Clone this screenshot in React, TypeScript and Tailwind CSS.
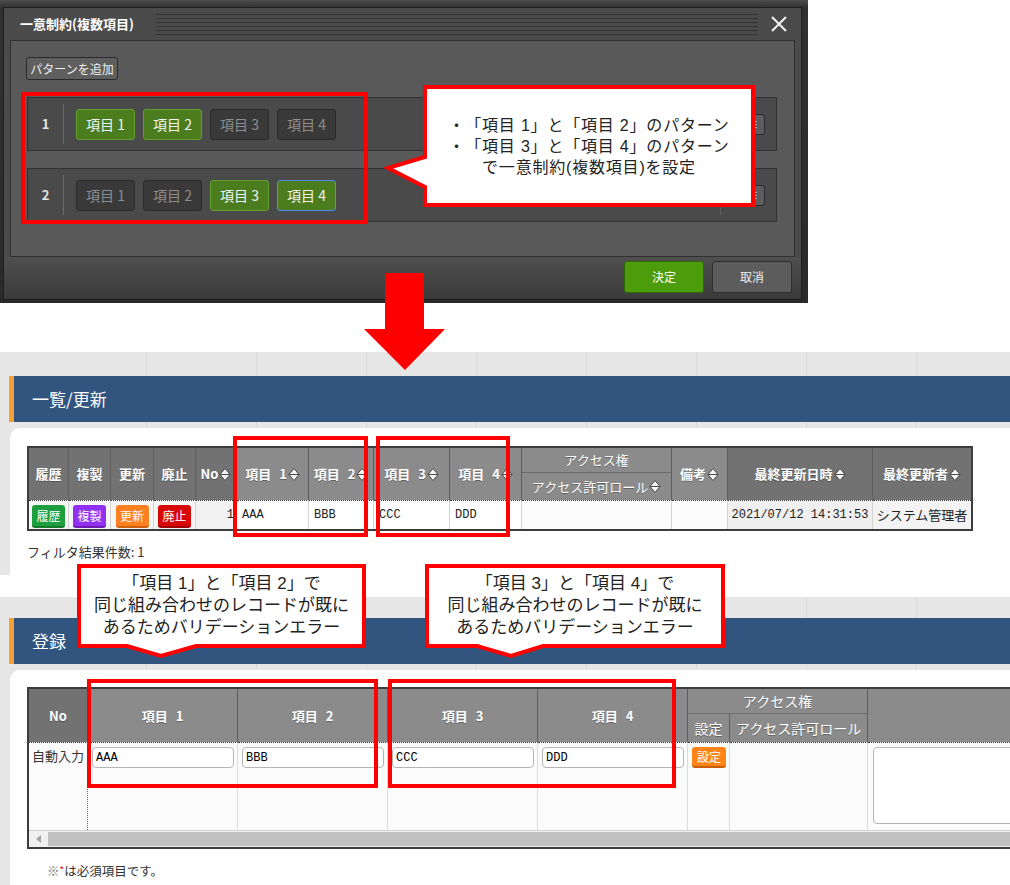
import React from "react";
import clsx from "clsx";

const dark = "bg-[#727272]";
const light = "bg-[#8b8b8b]";
const mono = "font-['Liberation_Mono',monospace]";
const note = "font-['Liberation_Sans','Noto_Sans_CJK_JP',sans-serif]";

const thBase =
  "border-r border-[#5e5e5e] p-0 text-center align-middle text-[13px] font-bold text-white [text-shadow:0_1px_0_rgba(0,0,0,0.3)]";

const td1 =
  "h-[29px] border-r border-[#d3d3d3] border-t border-t-[#333] [border-top-style:dotted] p-0 align-middle";

const td2 =
  "h-[88px] border-r border-[#dcdcdc] border-t border-t-[#333] [border-top-style:dotted] bg-[#fbfbfb] p-0 align-top";

function SortIcon() {
  return (
    <svg width="12" height="15" viewBox="0 0 12 15" className="ml-[1px] inline-block shrink-0">
      <path d="M1 7.5 L6 1.5 L11 7.5 Z" fill="#f4f4f4" stroke="#4a4a4a" strokeWidth="1" />
      <path d="M1 7.5 L6 13.5 L11 7.5 Z" fill="#f4f4f4" stroke="#4a4a4a" strokeWidth="1" />
    </svg>
  );
}

function Sortable({ children }: { children: React.ReactNode }) {
  return (
    <span className="inline-flex items-center justify-center">
      {children}
      <SortIcon />
    </span>
  );
}

function Chip({ n, on, focus }: { n: number; on: boolean; focus?: boolean }) {
  return (
    <div
      className={clsx(
        "flex h-[31px] w-[59px] items-center justify-center rounded-[3px] border text-[14px]",
        on ? "bg-[#4b7d1f] text-[#f2f2f2]" : "border-[#2b2b2b] bg-[#393939] text-[#8d8d8d]",
        on && !focus && "border-[#62a02d]",
        focus && "border-[#4d8fe6]"
      )}
    >
      項目 {n}
    </div>
  );
}

function PatternRow({ no, on, focus }: { no: number; on: number[]; focus?: number }) {
  return (
    <div className="flex h-[54px] w-[750px] items-stretch border border-[#323232] bg-[#4a4a4a]">
      <div className="flex w-[35px] items-center justify-center text-[13px] font-bold text-[#e2e2e2]">
        {no}
      </div>
      <div className="my-[6px] w-px bg-[#6a6a6a]" />
      <div className="flex items-center gap-[8px] pl-[12px]">
        {[1, 2, 3, 4].map((n) => (
          <Chip key={n} n={n} on={on.includes(n)} focus={focus === n} />
        ))}
      </div>
      <div className="flex-1" />
      <div className="my-[6px] w-px bg-[#606060]" />
      <div className="flex items-center pl-[20px] pr-[11px]">
        <div className="flex h-[21px] w-[24px] flex-col items-center justify-center gap-[2px] rounded-[3px] border border-[#2a2a2a] bg-[#5d5d5d]">
          <span className="h-px w-[8px] bg-[#aaa]" />
          <span className="h-px w-[8px] bg-[#aaa]" />
          <span className="h-px w-[8px] bg-[#aaa]" />
        </div>
      </div>
    </div>
  );
}

function DialogShot() {
  return (
    <div className="h-[303px] w-[808px] bg-[linear-gradient(180deg,#4d4d4d_0px,#303030_8px,#2a2a2a_100%)] pl-[3px] pt-[7px]">
      <div className="flex h-[293px] w-[799px] flex-col border border-[#1f1f1f] bg-[#4b4b4b]">
        <div className="flex h-[32px] items-center pl-[16px]">
          <span className="w-[116px] text-[13px] font-bold text-white">一意制約(複数項目)</span>
          <div className="ml-[20px] flex w-[602px] flex-col gap-[3px]">
            {[0, 1, 2, 3, 4, 5].map((i) => (
              <div key={i} className="h-px bg-[#333]" />
            ))}
          </div>
          <svg width="18" height="18" viewBox="0 0 18 18" className="ml-[12px]">
            <path d="M2 2 L16 16 M16 2 L2 16" stroke="#f2f2f2" strokeWidth="2" />
          </svg>
        </div>
        <div className="mx-[6px] h-[217px] border border-[#303030] bg-[#595959] pl-[15px] pt-[16px]">
          <button className="flex h-[23px] w-[92px] items-center justify-center rounded-[3px] border border-[#2a2a2a] bg-[#5f5f5f] text-[12px] text-[#eee]">
            パターンを追加
          </button>
          <div className="mt-[17px] flex flex-col gap-[17px] pl-[1px]">
            <PatternRow no={1} on={[1, 2]} />
            <PatternRow no={2} on={[3, 4]} focus={4} />
          </div>
        </div>
        <div className="flex flex-1 items-start justify-end gap-[8px] bg-gradient-to-b from-[#4f4f4f] to-[#3a3a3a] pr-[9px] pt-[4px]">
          <button className="flex h-[32px] w-[80px] items-center justify-center rounded-[3px] border border-[#2f6a05] bg-[#4c9c0c] text-[12px] text-white">
            決定
          </button>
          <button className="flex h-[32px] w-[80px] items-center justify-center rounded-[3px] border border-[#2e2e2e] bg-[#5c5c5c] text-[12px] text-[#eee]">
            取消
          </button>
        </div>
      </div>
    </div>
  );
}

function GridStrip({ className }: { className: string }) {
  return (
    <div className={clsx("flex", className)}>
      <div className="w-[147px] shrink-0 border-r border-[#d9d9d9]" />
      {[0, 1, 2, 3, 4, 5, 6, 7].map((i) => (
        <div key={i} className="w-[110px] shrink-0 border-r border-[#d9d9d9]" />
      ))}
    </div>
  );
}

function SectionHeader({ title }: { title: string }) {
  return (
    <div className="ml-[9px] flex h-[46px] items-center border-l-[5px] border-[#f6a032] bg-[#32557f] pl-[18px] text-[17px] text-white">
      {title}
    </div>
  );
}

function MiniBtn({ label, color }: { label: string; color: string }) {
  return (
    <span
      className={clsx(
        "inline-flex h-[23px] w-[33px] items-center justify-center rounded-[3px] border-b-2 text-[12px] text-white",
        color
      )}
    >
      {label}
    </span>
  );
}

function ListTable() {
  return (
    <table className="w-[946px] table-fixed border-separate border-spacing-0 border-2 border-[#3c3c3c]">
      <colgroup>
        <col className="w-[40px]" />
        <col className="w-[42px]" />
        <col className="w-[43px]" />
        <col className="w-[42px]" />
        <col className="w-[41px]" />
        <col className="w-[72px]" />
        <col className="w-[65px]" />
        <col className="w-[76px]" />
        <col className="w-[72px]" />
        <col className="w-[150px]" />
        <col className="w-[56px]" />
        <col className="w-[145px]" />
        <col className="w-[98px]" />
      </colgroup>
      <thead>
        <tr>
          <th rowSpan={2} className={clsx(thBase, dark)}>履歴</th>
          <th rowSpan={2} className={clsx(thBase, dark)}>複製</th>
          <th rowSpan={2} className={clsx(thBase, dark)}>更新</th>
          <th rowSpan={2} className={clsx(thBase, dark)}>廃止</th>
          <th rowSpan={2} className={clsx(thBase, dark, "text-[12px]")}>
            <Sortable>No</Sortable>
          </th>
          {[1, 2, 3, 4].map((n) => (
            <th key={n} rowSpan={2} className={clsx(thBase, light)}>
              <Sortable>
                項目<span className="ml-[8px]">{n}</span>
              </Sortable>
            </th>
          ))}
          <th className={clsx(thBase, light, "h-[25px] border-b border-b-[#6a6a6a] font-normal")}>
            アクセス権
          </th>
          <th rowSpan={2} className={clsx(thBase, light)}>
            <Sortable>備考</Sortable>
          </th>
          <th rowSpan={2} className={clsx(thBase, dark)}>
            <Sortable>最終更新日時</Sortable>
          </th>
          <th rowSpan={2} className={clsx(thBase, dark, "border-r-0")}>
            <Sortable>最終更新者</Sortable>
          </th>
        </tr>
        <tr>
          <th className={clsx(thBase, light, "h-[27px] font-normal")}>
            <Sortable>アクセス許可ロール</Sortable>
          </th>
        </tr>
      </thead>
      <tbody>
        <tr>
          <td className={clsx(td1, "bg-[#f6f6f6] text-center")}>
            <MiniBtn label="履歴" color="border-[#117a2b] bg-[#1e9f3f]" />
          </td>
          <td className={clsx(td1, "bg-[#f6f6f6] text-center")}>
            <MiniBtn label="複製" color="border-[#6a1cb3] bg-[#9130f0]" />
          </td>
          <td className={clsx(td1, "bg-[#f6f6f6] text-center")}>
            <MiniBtn label="更新" color="border-[#cf5f0a] bg-[#ff8020]" />
          </td>
          <td className={clsx(td1, "bg-[#f6f6f6] text-center")}>
            <MiniBtn label="廃止" color="border-[#a00000] bg-[#d90808]" />
          </td>
          <td className={clsx(td1, mono, "bg-[#f1f1f1] pr-[2px] text-right text-[12px] text-[#222]")}>1</td>
          <td className={clsx(td1, mono, "bg-white pl-[5px] text-[12px] text-[#222]")}>AAA</td>
          <td className={clsx(td1, mono, "bg-white pl-[5px] text-[12px] text-[#222]")}>BBB</td>
          <td className={clsx(td1, mono, "bg-white pl-[5px] text-[12px] text-[#222]")}>CCC</td>
          <td className={clsx(td1, mono, "bg-white pl-[5px] text-[12px] text-[#222]")}>DDD</td>
          <td className={clsx(td1, "bg-[#fbfbfb]")} />
          <td className={clsx(td1, "bg-[#fbfbfb]")} />
          <td className={clsx(td1, mono, "bg-[#efefef] text-center text-[12px] text-[#222]")}>
            2021/07/12 14:31:53
          </td>
          <td className={clsx(td1, "border-r-0 bg-[#f3f3f3] text-center text-[13px] text-[#222]")}>
            システム管理者
          </td>
        </tr>
      </tbody>
    </table>
  );
}

function Field({ v }: { v: string }) {
  return (
    <div
      className={clsx(
        "ml-[4px] mr-[3px] mt-[4px] flex h-[21px] items-center rounded-[4px] border border-[#b5b5b5] bg-white pl-[3px] text-[12px] text-black",
        mono
      )}
    >
      {v}
    </div>
  );
}

function RegisterTable() {
  return (
    <div className="w-[1061px] border-2 border-r-0 border-[#3c3c3c]">
      <table className="w-[1059px] table-fixed border-separate border-spacing-0">
        <colgroup>
          <col className="w-[59px]" />
          <col className="w-[150px]" />
          <col className="w-[150px]" />
          <col className="w-[150px]" />
          <col className="w-[150px]" />
          <col className="w-[42px]" />
          <col className="w-[138px]" />
          <col className="w-[220px]" />
        </colgroup>
        <thead>
          <tr>
            <th rowSpan={2} className={clsx(thBase, dark, "text-[12px]")}>No</th>
            {[1, 2, 3, 4].map((n) => (
              <th key={n} rowSpan={2} className={clsx(thBase, light)}>
                項目<span className="ml-[8px]">{n}</span>
              </th>
            ))}
            <th colSpan={2} className={clsx(thBase, light, "h-[25px] border-b border-b-[#6c6c6c] text-[14px] font-normal")}>
              アクセス権
            </th>
            <th rowSpan={2} className={clsx(thBase, light, "border-r-0")} />
          </tr>
          <tr>
            <th className={clsx(thBase, light, "h-[28px] text-[14px] font-normal")}>設定</th>
            <th className={clsx(thBase, light, "text-[14px] font-normal")}>アクセス許可ロール</th>
          </tr>
        </thead>
        <tbody>
          <tr>
            <td className={clsx(td2, "border-r-[#666] [border-right-style:dotted] pl-[3px] pt-[3px] text-[13px] text-[#333]")}>
              自動入力
            </td>
            <td className={td2}>
              <Field v="AAA" />
            </td>
            <td className={td2}>
              <Field v="BBB" />
            </td>
            <td className={td2}>
              <Field v="CCC" />
            </td>
            <td className={td2}>
              <Field v="DDD" />
            </td>
            <td className={td2}>
              <span className="ml-[4px] mt-[4px] flex h-[21px] w-[34px] items-center justify-center rounded-[3px] border-b-2 border-[#c95c05] bg-[#ff8418] text-[12px] text-white">
                設定
              </span>
            </td>
            <td className={td2} />
            <td className={clsx(td2, "border-r-0")}>
              <div className="ml-[5px] mt-[4px] h-[77px] rounded-[4px] border border-[#b5b5b5] bg-white" />
            </td>
          </tr>
        </tbody>
      </table>
      <div className="flex h-[17px] border-t border-[#d0d0d0] bg-[#f0f0f0]">
        <div className="flex w-[19px] items-center justify-center">
          <svg width="5" height="8" viewBox="0 0 5 8">
            <path d="M5 0 L0 4 L5 8 Z" fill="#a3a3a3" />
          </svg>
        </div>
        <div className="my-[1px] flex-1 bg-[#c1c1c1]" />
      </div>
    </div>
  );
}

function ListSection() {
  return (
    <section className="bg-[#e6e6e6]">
      <GridStrip className="h-[24px]" />
      <SectionHeader title="一覧/更新" />
      <GridStrip className="h-[6px]" />
      <div className="flex h-[147px]">
        <div className="w-[10px] shrink-0" />
        <div className="flex-1 rounded-tl-[10px] bg-white pl-[17px] pt-[18px]">
          <ListTable />
          <p className="mt-[11px] text-[13px] text-[#333]">フィルタ結果件数: 1</p>
        </div>
      </div>
    </section>
  );
}

function RegisterSection() {
  return (
    <section className="bg-[#e6e6e6]">
      <GridStrip className="h-[21px]" />
      <SectionHeader title="登録" />
      <GridStrip className="h-[6px]" />
      <div className="flex h-[215px]">
        <div className="w-[10px] shrink-0" />
        <div className="flex-1 overflow-hidden rounded-tl-[10px] bg-white pl-[17px] pt-[17px]">
          <RegisterTable />
          <p className="mt-[13px] pl-[20px] text-[12.5px] text-[#333]">
            <span className="text-[#777]">※</span>
            <span className="align-top text-[10px] text-[#e00]">*</span>は必須項目です。
          </p>
        </div>
      </div>
    </section>
  );
}

function RedBox({ className }: { className: string }) {
  return <div className={clsx("pointer-events-none absolute border-4 border-[#ff0000]", className)} />;
}

function Annotations() {
  return (
    <>
      <svg className="pointer-events-none absolute left-0 top-0" width="1010" height="885">
        <polygon points="385,273 424,273 424,329 445,329 405,370 364,329 385,329" fill="#ff0000" />
        <path
          d="M425 87 H753 V205 H425 V187 L388 168 L425 157 Z"
          fill="#fff"
          stroke="#ff0000"
          strokeWidth="4"
        />
        <path
          d="M79 566 H364 V646 H196 L161 656 L127 646 H79 Z"
          fill="#fff"
          stroke="#ff0000"
          strokeWidth="4"
        />
        <path
          d="M427 566 H723 V646 H543 L511 656 L477 646 H427 Z"
          fill="#fff"
          stroke="#ff0000"
          strokeWidth="4"
        />
      </svg>

      <RedBox className="left-[21px] top-[92px] h-[132px] w-[347px]" />
      <RedBox className="left-[233px] top-[436px] h-[101px] w-[135px]" />
      <RedBox className="left-[376px] top-[436px] h-[101px] w-[134px]" />
      <RedBox className="left-[87px] top-[679px] h-[109px] w-[291px]" />
      <RedBox className="left-[388px] top-[679px] h-[109px] w-[288px]" />

      <div
        className={clsx(
          "absolute left-[423px] top-[85px] flex h-[122px] w-[332px] flex-col items-center justify-center text-[16px] leading-[21px] tracking-[0.8px] text-[#222]",
          note
        )}
      >
        <p>・「項目 1」と「項目 2」のパターン</p>
        <p>・「項目 3」と「項目 4」のパターン</p>
        <p>で一意制約(複数項目)を設定</p>
      </div>
      <div
        className={clsx(
          "absolute left-[77px] top-[564px] flex h-[84px] w-[289px] flex-col items-center justify-center text-[17px] leading-[22px] text-[#222]",
          note
        )}
      >
        <p>「項目 1」と「項目 2」で</p>
        <p>同じ組み合わせのレコードが既に</p>
        <p>あるためバリデーションエラー</p>
      </div>
      <div
        className={clsx(
          "absolute left-[425px] top-[564px] flex h-[84px] w-[300px] flex-col items-center justify-center text-[17px] leading-[22px] text-[#222]",
          note
        )}
      >
        <p>「項目 3」と「項目 4」で</p>
        <p>同じ組み合わせのレコードが既に</p>
        <p>あるためバリデーションエラー</p>
      </div>
    </>
  );
}

export default function App() {
  return (
    <div className="relative h-[885px] w-[1010px] overflow-hidden bg-white font-['Noto_Sans_CJK_JP','Noto_Sans',sans-serif] [text-spacing-trim:space-all]">
      <DialogShot />
      <div className="h-[49px]" />
      <ListSection />
      <div className="h-[22px]" />
      <RegisterSection />
      <Annotations />
    </div>
  );
}
